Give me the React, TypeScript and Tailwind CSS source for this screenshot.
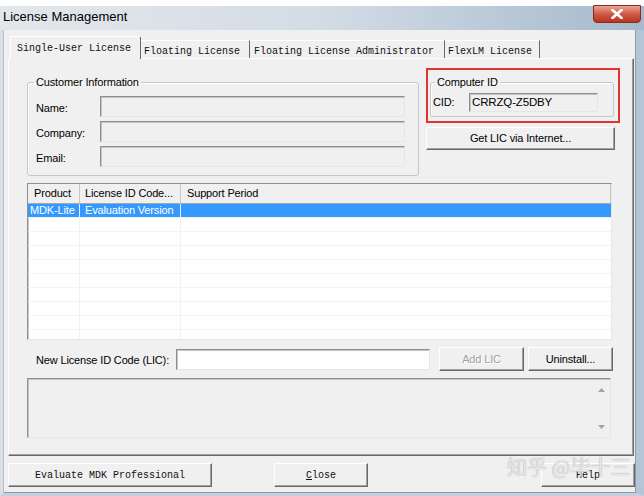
import React from "react";

const sans = "font-['Liberation_Sans','Arial',sans-serif]";
const mono = "font-['Liberation_Mono','Courier_New',monospace]";

const raised =
    "bg-[#f0f0f0] border border-t-white border-l-white border-r-[#696969] border-b-[#696969] shadow-[inset_-1px_-1px_0_#a0a0a0]";
const sunken =
    "border border-t-[#8f8f8f] border-l-[#8f8f8f] border-r-[#e6e6e6] border-b-[#e6e6e6] shadow-[inset_1px_1px_0_#c4c4c4]";

const tabs = [
    { label: "Floating License", w: "w-[109px]", pl: "pl-[3px]" },
    { label: "Floating License Administrator", w: "w-[195px]", pl: "pl-[4px]" },
    { label: "FlexLM License", w: "w-[95px]", pl: "pl-[3px]" },
];

function Field({ label }: { label: string }) {
    return (
        <div className="flex items-center h-[21px]">
            <span className="w-[64px] pt-[4px]">{label}</span>
            <div className={`w-[305px] h-[21px] bg-[#f0f0f0] ${sunken}`}></div>
        </div>
    );
}

function Arrow({ up }: { up?: boolean }) {
    return (
        <svg width="7" height="4" viewBox="0 0 7 4">
            <path d={up ? "M0 4 L3.5 0 L7 4 Z" : "M0 0 L3.5 4 L7 0 Z"} fill="#a3a3a3" />
        </svg>
    );
}

function App() {
    const rows = Array.from({ length: 9 });

    return (
        <div className={`relative w-[644px] h-[496px] bg-white flex flex-col overflow-hidden text-black ${sans}`}>
            {/* title bar */}
            <div className="mt-[6px] h-[24px] pl-[3px] leading-[22px] text-[13px] bg-gradient-to-r from-[#e3e7eb] via-[#d3dce5] to-[#a6b9cc]">
                License Management
            </div>
            <div className="absolute top-[5px] left-[593px] w-[48px] h-[18px] rounded-b-[4px] border border-[#8a2b1c] bg-gradient-to-b from-[#e7a594] via-[#cf5a43] to-[#b8341f] flex items-center justify-center">
                <svg width="12" height="10" viewBox="0 0 12 10">
                    <path d="M1.5 1 L10.5 9 M10.5 1 L1.5 9" stroke="white" strokeWidth="2.6" strokeLinecap="square" />
                </svg>
            </div>

            {/* window body */}
            <div className="flex-1 flex flex-col bg-[#f0f0f0] border-l-[3px] border-l-[#d9dfe5] border-r-[8px] border-r-[#b3c5d7] border-b-[3px] border-b-[#c3d0dd] shadow-[inset_1px_0_0_#b9c0c8,inset_-1px_0_0_#8d9aa8,inset_0_-1px_0_#8d9aa8] text-[11px] tracking-[-0.15px]">
                {/* tab strip */}
                <div className={`mt-[6px] ml-[7px] flex items-end h-[22px] text-[10px] tracking-normal text-[#111] ${mono}`}>
                    <div className="relative z-10 -mb-px w-[131px] h-[23px] pl-[6px] pt-[4px] bg-[#f0f0f0] border-t border-l border-t-white border-l-white border-r border-r-[#696969] rounded-t-[2px]">
                        Single-User License
                    </div>
                    {tabs.map((t, i) => (
                        <div
                            key={i}
                            className={`${t.w} ${t.pl} h-[18px] pt-[3px] whitespace-nowrap border-t border-t-white border-r border-r-[#696969]`}
                        >
                            {t.label}
                        </div>
                    ))}
                </div>

                {/* panel */}
                <div className="ml-[5px] w-[626px] h-[398px] border border-t-white border-l-white border-r-[#696969] border-b-[#696969] shadow-[inset_-1px_-1px_0_#a0a0a0] pl-[18px] pt-[9px]">
                    <div className="flex items-start">
                        <fieldset className="mt-[7px] w-[392px] h-[101px] border border-[#c6c6c6] rounded-[3px] shadow-[inset_1px_1px_0_#ffffff] pl-[8px]">
                            <legend className="ml-[-2px] px-[2px] leading-[14px]">Customer Information</legend>
                            <div className="mt-[7px] flex flex-col gap-[4px]">
                                <Field label="Name:" />
                                <Field label="Company:" />
                                <Field label="Email:" />
                            </div>
                        </fieldset>

                        <div className="ml-[7px] w-[194px] flex flex-col">
                            <div className="h-[55px] border-2 border-[#e2332f] pl-[2px] pt-[5px]">
                                <fieldset className="w-[184px] h-[42px] border border-[#c6c6c6] rounded-[3px] shadow-[inset_1px_1px_0_#ffffff] pl-[2px]">
                                    <legend className="ml-[2px] px-[2px] leading-[14px]">Computer ID</legend>
                                    <div className="mt-[4px] flex items-center">
                                        <span className="w-[36px]">CID:</span>
                                        <div className={`w-[129px] h-[19px] bg-[#f0f0f0] pl-[2px] leading-[17px] text-[11.5px] ${sunken}`}>
                                            CRRZQ-Z5DBY
                                        </div>
                                    </div>
                                </fieldset>
                            </div>
                            <button className={`mt-[4px] w-[189px] h-[23px] ${raised}`}>Get LIC via Internet...</button>
                        </div>
                    </div>

                    {/* list view */}
                    <div className={`mt-[7px] w-[585px] h-[157px] bg-white overflow-hidden ${sunken}`}>
                        <div className="flex h-[20px] bg-[#f0f0f0] border-b border-b-[#a8a8a8] leading-[19px]">
                            <div className="w-[52px] pl-[6px] border-r border-r-[#c8c8c8]">Product</div>
                            <div className="w-[101px] pl-[5px] border-r border-r-[#c8c8c8]">License ID Code...</div>
                            <div className="flex-1 pl-[6px] border-r border-r-[#c8c8c8]">Support Period</div>
                        </div>
                        <div className="flex h-[14px] leading-[13px] text-white border-b border-b-[#f4f4f4]">
                            <div className="w-[52px] pl-[2px] bg-[#3399ff] border-r border-r-[#e6f0fb]">MDK-Lite</div>
                            <div className="w-[101px] pl-[5px] bg-[#3399ff] border-r border-r-[#e6f0fb]">Evaluation Version</div>
                            <div className="flex-1 bg-[#3399ff]"></div>
                        </div>
                        {rows.map((_, i) => (
                            <div key={i} className="flex h-[14px] border-b border-b-[#f3f3f3]">
                                <div className="w-[52px] border-r border-r-[#f3f3f3]"></div>
                                <div className="w-[101px] border-r border-r-[#f3f3f3]"></div>
                                <div className="flex-1"></div>
                            </div>
                        ))}
                    </div>

                    {/* new LIC row */}
                    <div className="mt-[7px] flex items-center h-[24px]">
                        <span className="ml-[9px] w-[140px] pt-[2px]">New License ID Code (LIC):</span>
                        <div className={`w-[254px] h-[21px] bg-white ${sunken}`}></div>
                        <button className={`ml-[9px] w-[85px] h-[24px] text-[#a0a0a0] [text-shadow:1px_1px_0_#ffffff] ${raised}`}>
                            Add LIC
                        </button>
                        <button className={`ml-[4px] w-[85px] h-[24px] ${raised}`}>Uninstall...</button>
                    </div>

                    {/* message box */}
                    <div className={`mt-[7px] w-[584px] h-[60px] bg-[#f0f0f0] flex justify-end ${sunken}`}>
                        <div className="w-[17px] flex flex-col items-center justify-between pt-[9px] pb-[8px]">
                            <Arrow up />
                            <Arrow />
                        </div>
                    </div>
                </div>

                {/* bottom buttons */}
                <div className={`mt-[7px] flex h-[24px] text-[10px] tracking-normal text-[#111] ${mono}`}>
                    <button className={`ml-[5px] w-[204px] ${raised}`}>Evaluate MDK Professional</button>
                    <button className={`ml-[62px] w-[94px] ${raised}`}>
                        <span className="underline">C</span>lose
                    </button>
                    <button className={`ml-[173px] w-[94px] ${raised}`}>Help</button>
                </div>
            </div>

            {/* watermark */}
            <div className="absolute left-[507px] top-[456px] text-[20px] leading-[22px] whitespace-nowrap text-[#e6e6e6] [text-shadow:0_0_1px_#8a8a8a] font-['Noto_Sans_CJK_SC',sans-serif] opacity-85">
                知乎 @毕十三
            </div>
        </div>
    );
}

export default App;
